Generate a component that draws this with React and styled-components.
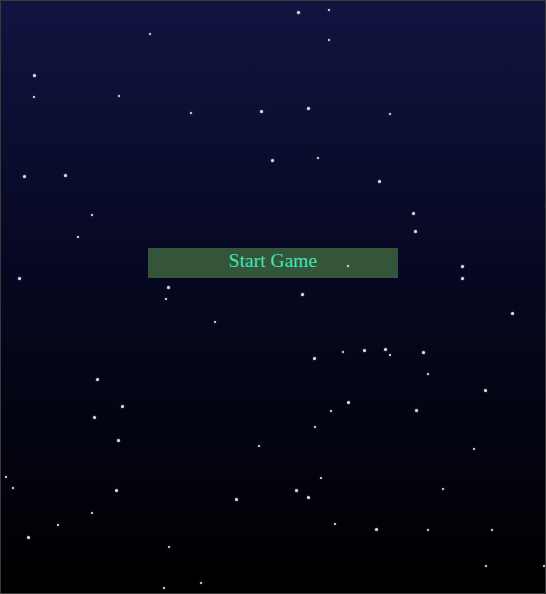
import React from "react";
import styled, { createGlobalStyle } from "styled-components";

const GlobalStyle = createGlobalStyle`
  html, body {
    margin: 0;
    padding: 0;
    background: #000;
  }
`;

const Sky = styled.div`
  position: relative;
  width: 546px;
  height: 594px;
  box-sizing: border-box;
  border: 1px solid #3a3a3a;
  overflow: hidden;
  background: linear-gradient(to bottom, #11143f 0%, #060822 45%, #000000 100%);
  display: flex;
  flex-direction: column;
  align-items: center;
  padding-top: 247px;
`;

const StartButton = styled.button`
  width: 250px;
  height: 30px;
  border: none;
  padding: 0 0 4px;
  background: #34553a;
  color: #3fe8b8;
  font-family: "Liberation Serif", "Times New Roman", serif;
  font-size: 19.5px;
  line-height: 26px;
  cursor: pointer;
`;

const Star = styled.span`
  position: absolute;
  width: ${(p) => p.$size}px;
  height: ${(p) => p.$size}px;
  margin: -${(p) => Math.ceil(p.$size / 2)}px 0 0 -${(p) => Math.floor(p.$size / 2)}px;
  border-radius: 50%;
  background: #e0e0e0;
  box-shadow: 0 0 1.5px rgba(220, 220, 220, 0.8);
  pointer-events: none;
`;

const stars = [
  [297, 12, 3], [328, 9, 2], [149, 33, 2], [328, 39, 2], [33, 75, 3], [33, 96, 2],
  [118, 95, 2], [190, 112, 2], [260, 111, 3], [307, 108, 3], [389, 113, 2], [545, 151, 2],
  [23, 176, 3], [64, 175, 3], [271, 160, 3], [317, 157, 2], [378, 181, 3], [412, 213, 3],
  [414, 231, 3], [91, 214, 2], [77, 236, 2], [18, 278, 3], [347, 265, 2], [461, 266, 3],
  [461, 278, 3], [167, 287, 3], [165, 298, 2], [301, 294, 3], [511, 313, 3], [214, 321, 2],
  [313, 358, 3], [342, 351, 2], [363, 350, 3], [384, 349, 3], [389, 354, 2], [422, 352, 3],
  [427, 373, 2], [96, 379, 3], [484, 390, 3], [121, 406, 3], [93, 417, 3], [347, 402, 3],
  [330, 410, 2], [415, 410, 3], [314, 426, 2], [117, 440, 3], [258, 445, 2], [473, 448, 2],
  [5, 476, 2], [12, 487, 2], [320, 477, 2], [115, 490, 3], [295, 490, 3], [307, 497, 3],
  [442, 488, 2], [235, 499, 3], [91, 512, 2], [334, 523, 2], [57, 524, 2], [375, 529, 3],
  [427, 529, 2], [491, 529, 2], [27, 537, 3], [168, 546, 2], [543, 565, 2], [485, 565, 2],
  [163, 587, 2], [200, 582, 2], [545, 205, 2],
];

export default function App() {
  return (
    <>
      <GlobalStyle />
      <Sky>
        <StartButton>Start Game</StartButton>
        {stars.map(([x, y, s], i) => (
          <Star key={i} $size={s} style={{ left: x, top: y }} />
        ))}
      </Sky>
    </>
  );
}
